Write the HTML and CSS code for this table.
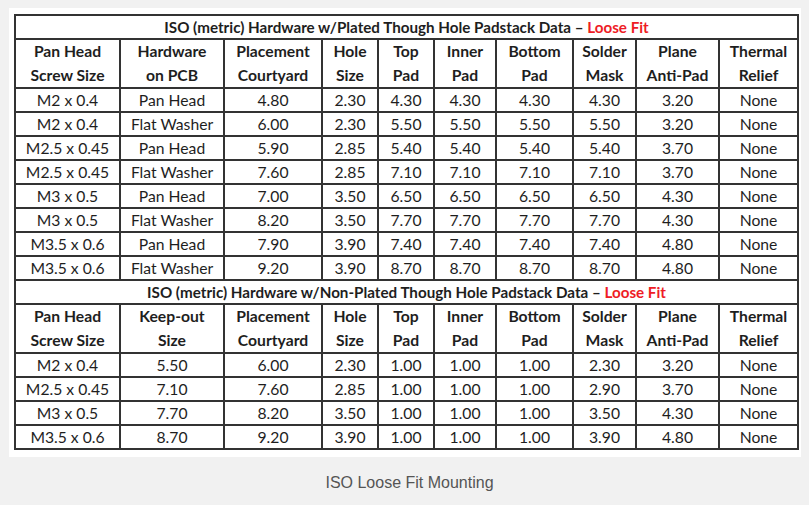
FILE: index.html
```html
<!DOCTYPE html>
<html>
<head>
<meta charset="utf-8">
<link rel="stylesheet" href="styles.css">
</head>
<body>
<figure class="fig">
  <div class="frame">
    <table class="pad">
      <colgroup>
        <col class="c1"><col class="c2"><col class="c3"><col class="c4"><col class="c5">
        <col class="c6"><col class="c7"><col class="c8"><col class="c9"><col class="c10">
      </colgroup>
      <tbody>
        <tr class="title"><td colspan="10">ISO (metric) Hardware w/Plated Though Hole Padstack Data – <span class="red">Loose Fit</span></td></tr>
        <tr class="head">
          <td>Pan Head<br>Screw Size</td><td>Hardware<br>on PCB</td><td>Placement<br>Courtyard</td><td>Hole<br>Size</td><td>Top<br>Pad</td>
          <td>Inner<br>Pad</td><td>Bottom<br>Pad</td><td>Solder<br>Mask</td><td>Plane<br>Anti-Pad</td><td>Thermal<br>Relief</td>
        </tr>
        <tr><td>M2 x 0.4</td><td>Pan Head</td><td>4.80</td><td>2.30</td><td>4.30</td><td>4.30</td><td>4.30</td><td>4.30</td><td>3.20</td><td>None</td></tr>
        <tr><td>M2 x 0.4</td><td>Flat Washer</td><td>6.00</td><td>2.30</td><td>5.50</td><td>5.50</td><td>5.50</td><td>5.50</td><td>3.20</td><td>None</td></tr>
        <tr><td>M2.5 x 0.45</td><td>Pan Head</td><td>5.90</td><td>2.85</td><td>5.40</td><td>5.40</td><td>5.40</td><td>5.40</td><td>3.70</td><td>None</td></tr>
        <tr><td>M2.5 x 0.45</td><td>Flat Washer</td><td>7.60</td><td>2.85</td><td>7.10</td><td>7.10</td><td>7.10</td><td>7.10</td><td>3.70</td><td>None</td></tr>
        <tr><td>M3 x 0.5</td><td>Pan Head</td><td>7.00</td><td>3.50</td><td>6.50</td><td>6.50</td><td>6.50</td><td>6.50</td><td>4.30</td><td>None</td></tr>
        <tr><td>M3 x 0.5</td><td>Flat Washer</td><td>8.20</td><td>3.50</td><td>7.70</td><td>7.70</td><td>7.70</td><td>7.70</td><td>4.30</td><td>None</td></tr>
        <tr><td>M3.5 x 0.6</td><td>Pan Head</td><td>7.90</td><td>3.90</td><td>7.40</td><td>7.40</td><td>7.40</td><td>7.40</td><td>4.80</td><td>None</td></tr>
        <tr><td>M3.5 x 0.6</td><td>Flat Washer</td><td>9.20</td><td>3.90</td><td>8.70</td><td>8.70</td><td>8.70</td><td>8.70</td><td>4.80</td><td>None</td></tr>
        <tr class="title"><td colspan="10">ISO (metric) Hardware w/Non-Plated Though Hole Padstack Data – <span class="red">Loose Fit</span></td></tr>
        <tr class="head">
          <td>Pan Head<br>Screw Size</td><td>Keep-out<br>Size</td><td>Placement<br>Courtyard</td><td>Hole<br>Size</td><td>Top<br>Pad</td>
          <td>Inner<br>Pad</td><td>Bottom<br>Pad</td><td>Solder<br>Mask</td><td>Plane<br>Anti-Pad</td><td>Thermal<br>Relief</td>
        </tr>
        <tr><td>M2 x 0.4</td><td>5.50</td><td>6.00</td><td>2.30</td><td>1.00</td><td>1.00</td><td>1.00</td><td>2.30</td><td>3.20</td><td>None</td></tr>
        <tr><td>M2.5 x 0.45</td><td>7.10</td><td>7.60</td><td>2.85</td><td>1.00</td><td>1.00</td><td>1.00</td><td>2.90</td><td>3.70</td><td>None</td></tr>
        <tr><td>M3 x 0.5</td><td>7.70</td><td>8.20</td><td>3.50</td><td>1.00</td><td>1.00</td><td>1.00</td><td>3.50</td><td>4.30</td><td>None</td></tr>
        <tr><td>M3.5 x 0.6</td><td>8.70</td><td>9.20</td><td>3.90</td><td>1.00</td><td>1.00</td><td>1.00</td><td>3.90</td><td>4.80</td><td>None</td></tr>
      </tbody>
    </table>
  </div>
  <figcaption class="caption">ISO Loose Fit Mounting</figcaption>
</figure>
</body>
</html>
```
FILE: styles.css
```css
html, body {
  margin: 0;
  padding: 0;
  background: #f1f1f1;
}
.fig {
  margin: 0;
  padding: 8px 8px 0 9px;
}
.frame {
  width: 782px;
  background: #fff;
  padding: 6px 5px 7px 5px;
}
.pad {
  border-collapse: collapse;
  table-layout: fixed;
  width: 783px;
  font-family: Lato, "Open Sans", sans-serif;
  font-size: 15.7px;
  color: #1e1e1e;
}
.c1 { width: 105px; }
.c2 { width: 104px; }
.c3 { width: 98px; }
.c4 { width: 56px; }
.c5 { width: 56px; }
.c6 { width: 62px; }
.c7 { width: 77px; }
.c8 { width: 63px; }
.c9 { width: 83px; }
.c10 { width: 79px; }
.pad td {
  border: 2px solid #333;
  text-align: center;
  padding: 0;
  height: 22px;
  line-height: 21px;
  white-space: nowrap;
  overflow: hidden;
}
.pad .title td {
  font-weight: bold;
  font-size: 15.2px;
}
.pad .head td {
  font-weight: bold;
  height: 47px;
  line-height: 23.5px;
}
.red {
  color: #ee1c25;
}
.caption {
  margin: 17px 0 0 0;
  text-align: center;
  padding-left: 9px;
  font-family: "Liberation Sans", Arial, sans-serif;
  font-size: 16px;
  color: #555;
}
```
